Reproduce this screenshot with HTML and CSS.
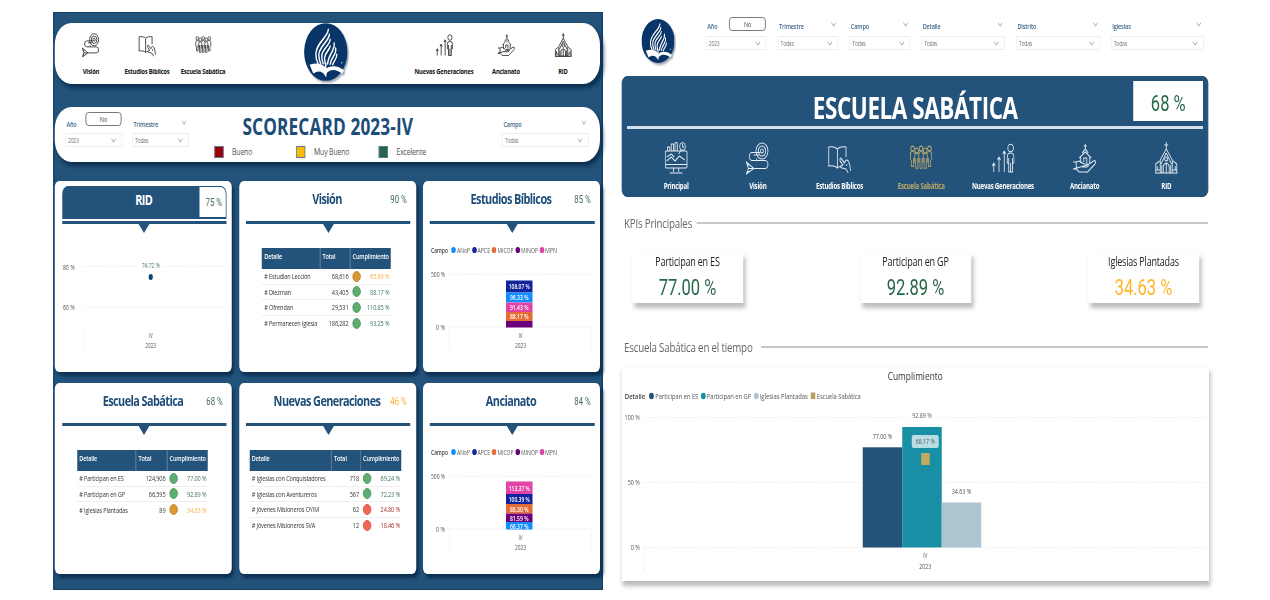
FILE: index.html
```html
<!DOCTYPE html>
<html lang="es">
<head>
<meta charset="utf-8">
<title>Scorecard 2023-IV</title>
<link rel="stylesheet" href="styles.css">
</head>
<body>
<svg class="defs" width="0" height="0" aria-hidden="true">
  <symbol id="logo" viewBox="0 0 60 60">
    <circle cx="30" cy="30" r="29.5" fill="#083467"/>
    <g fill="none" stroke="#fff" stroke-linecap="round">
      <path stroke-width="1.900" d="M33.500 7C33 15 17.500 20 16.500 32c0 4 1 7 3 10"/>
      <path stroke-width="1.900" d="M35 12C34.500 19 21 24 20.500 33c0 4 1 6 2.500 9"/>
      <path stroke-width="1.900" d="M36 17.500C35.500 23 25 27 24.500 34c0 3 .6 5 2 8"/>
      <path stroke-width="1.900" d="M36 24C35.500 28 29 30 28.400 36c0 2 .3 4 1 6"/>
      <path stroke-width="1.900" d="M41.500 21C43 29 33.500 32 32.500 42"/>
      <path stroke-width="1.900" d="M43.500 26C45.500 33 37 35 36 42.500"/>
      <path stroke-width="1.800" d="M45 32.500C46 37 40.500 39 39.500 43"/>
    </g>
    <path fill="#fff" d="M8 43c8-2 15-2 21 2l2 2c6-4 17-3 24 2l-3 3c-7-4-14-5-20-1l-3 3c-4-5-10-5-16-2z"/>
    <path fill="#fff" d="M29 41h2v14h-2z"/>
    <circle cx="52" cy="41" r=".8" fill="#fff"/>
  </symbol>
  <symbol id="i-main" viewBox="0 0 32 32">
    <rect x="1" y="9" width="29" height="17" rx="1.5"/><path d="M1 22.5h29M12 26v4M19 26v4M7 31h17M3 19l6-4 5 4 6-5 7 4M3 15l6-3 4 3"/>
    <path d="M4 9V5h3v4M9 9V2h3v7M14 9V0.8h3V9"/><circle cx="24" cy="4.5" r="3.7"/><path d="M22 8l-3 4M24 2v3h2"/>
  </symbol>
  <symbol id="i-vision" viewBox="0 0 32 32">
    <circle cx="22" cy="9" r="8"/><circle cx="22" cy="9" r="5"/><circle cx="22" cy="9" r="2"/>
    <path d="M20 10.500H9a4 4 0 0 0 0 8h17a4 4 0 0 1 0 8H10M18 13h-7M15 18.500v-2"/>
    <path d="M1 20l10 6.500L1 32l3-5.500zM4 26.500h6M2 23h3M2 29.500h3"/>
  </symbol>
  <symbol id="i-book" viewBox="0 0 32 32">
    <path d="M13.500 7C11 5 7 4.500 2 5v19c5-.5 9 0 11.500 2C15 25 16 24.500 18 24.200M13.500 7C16 5 20 4.500 25 5v10M13.500 7v19"/>
    <path d="M18 16l5 5c1-3 3-4 5-2l2 4 1 6M18 16c-2 1-1 3 0 4l3 3-3 1c-1 1 0 2 2 2l5 1 3 4M26 22v2"/>
  </symbol>
  <symbol id="i-people" viewBox="-1 -1 34 36">
    <circle cx="4" cy="7" r="2.600"/><circle cx="10" cy="9" r="2.600"/><circle cx="16" cy="7" r="2.600"/><circle cx="22" cy="9" r="2.600"/><circle cx="28" cy="7" r="2.600"/>
    <path d="M1 19v-6q0-3 3-3t3 2M2.500 19v7h3v-9M7 22v-7q0-3 3-3t3 3v7M8.500 17v11h3V17M13 13q0-3 3-3t3 3M14.500 17v11h3V17M19 22v-7q0-3 3-3t3 3v7M20.500 17v11h3V17M25 12q0-2 3-2t3 3v6M26.500 17v9h3v-7"/>
  </symbol>
  <symbol id="i-growth" viewBox="0 0 32 32">
    <path d="M4 30v-8M11 30V15M18 30V10M2 24l2-3 2 3M9 18l2-3 2 3M16 12l2-3 2 3"/>
    <circle cx="26.500" cy="6" r="3.700"/><path d="M22 21v-6q0-4 4.500-4t4.500 4v6h-2v9h-5v-9zM26.500 21v9M24 16v5M29 16v5"/>
  </symbol>
  <symbol id="i-care" viewBox="0 0 32 32">
    <path d="M17 2v5M15 4h4M17 7l-4 4M17 7l4 4M9 16l8-6 8 6M11 15v6M23 15v6M15 20v-4h4v5"/>
    <path d="M1 20h4l4-1 6 3h5c2 1 1 3-1 3h-6M20 23l8-4c3-1 4 1 2 3l-10 8H9l-4-3H1zM5 20v7"/>
  </symbol>
  <symbol id="i-church" viewBox="0 0 32 32">
    <path d="M16 0v8M13.500 3h5M16 7L8 18v13M16 7l8 11v13M7 19L2 22v9h28v-9l-5-3M16 11l-7 11M16 11l7 11M2 28h6M24 28h6M1 31h30M4 24v4M28 24v4"/>
    <circle cx="16" cy="17" r="2"/><path d="M12 31v-6q0-3 4-4 4 1 4 4v6M16 21v10M10 23v8M22 23v8"/>
  </symbol>
  <symbol id="chev" viewBox="0 0 8 6"><path d="M.7.8L4 5 7.300.8" fill="none" stroke="#888" stroke-width=".9"/></symbol>
</svg>

<div class="stage">
  <section class="board">
    <header class="topbar">
      <nav class="nav nav-left">
        <a class="tab"><svg><use href="#i-vision"/></svg>Visión</a>
        <a class="tab"><svg><use href="#i-book"/></svg>Estudios Bíblicos</a>
        <a class="tab"><svg><use href="#i-people"/></svg>Escuela Sabática</a>
      </nav>
      <svg class="logo"><use href="#logo"/></svg>
      <nav class="nav nav-right">
        <a class="tab"><svg><use href="#i-growth"/></svg>Nuevas Generaciones</a>
        <a class="tab"><svg><use href="#i-care"/></svg>Ancianato</a>
        <a class="tab"><svg><use href="#i-church"/></svg>RID</a>
      </nav>
    </header>

    <div class="titlebar">
      <div class="filters">
        <div class="filter w57"><div class="flabel">Año<span class="no">No</span></div><div class="select">2023<svg><use href="#chev"/></svg></div></div>
        <div class="filter w57"><div class="flabel">Trimestre<svg><use href="#chev"/></svg></div><div class="select">Todas<svg><use href="#chev"/></svg></div></div>
      </div>
      <div class="headline">
        <h1>SCORECARD 2023-IV</h1>
        <div class="levels">
          <span class="level"><i class="red"></i>Bueno</span>
          <span class="level"><i class="yellow"></i>Muy Bueno</span>
          <span class="level"><i class="green"></i>Excelente</span>
        </div>
      </div>
      <div class="filters">
        <div class="filter w87"><div class="flabel">Campo<svg><use href="#chev"/></svg></div><div class="select">Todas<svg><use href="#chev"/></svg></div></div>
      </div>
    </div>

    <div class="cards">
      <article class="card">
        <div class="chead solid"><h2>RID</h2><b class="pct">75 %</b></div>
        <div class="rule"></div>
        <svg class="plot" viewBox="0 0 177 148" preserveAspectRatio="none">
          <path class="grid" d="M28 42.500h145M28 83h145M29.500 104v24M173 104v24"/>
          <rect x="85" y="36" width="22" height="10" fill="#fff"/>
          <g class="t">
            <text lengthAdjust="spacingAndGlyphs" x="8" y="45.500" textLength="12">80 %</text>
            <text lengthAdjust="spacingAndGlyphs" x="8" y="85.500" textLength="12">60 %</text>
            <text lengthAdjust="spacingAndGlyphs" class="g" x="87" y="44" textLength="18">74.72 %</text>
            <text lengthAdjust="spacingAndGlyphs" x="94" y="113.500" textLength="4">IV</text>
            <text lengthAdjust="spacingAndGlyphs" x="90.500" y="123.500" textLength="11">2023</text>
          </g>
          <ellipse cx="96" cy="53" rx="2.100" ry="2.900" fill="#12426f"/>
        </svg>
      </article>
      <article class="card">
        <div class="chead"><h2>Visión</h2><b class="pct">90 %</b></div>
        <div class="rule"></div>
        <table class="tbl t-vision">
          <colgroup><col class="c1"><col class="c2"><col class="c3"><col></colgroup>
          <tr><th>Detalle</th><th>Total</th><th colspan="2">Cumplimiento</th></tr>
          <tr><td># Estudian Lección</td><td>68,616</td><td><i class="o"></i></td><td class="c-o">65.89 %</td></tr>
          <tr><td># Diezman</td><td>43,405</td><td><i></i></td><td>88.17 %</td></tr>
          <tr><td># Ofrendan</td><td>29,531</td><td><i></i></td><td>110.85 %</td></tr>
          <tr><td># Permanecen Iglesia</td><td>186,282</td><td><i></i></td><td>93.25 %</td></tr>
        </table>
      </article>
      <article class="card">
        <div class="chead"><h2>Estudios Bíblicos</h2><b class="pct">85 %</b></div>
        <div class="rule"></div>
        <svg class="plot" viewBox="0 0 177 148" preserveAspectRatio="none">
          <path class="grid" d="M26 50.500h142M26 103h142M26.500 104v24M168 104v24"/>
          <g class="t">
            <text lengthAdjust="spacingAndGlyphs" class="b" x="8" y="29" textLength="17">Campo</text>
            <text lengthAdjust="spacingAndGlyphs" x="34" y="29" textLength="13">ANoP</text>
            <text lengthAdjust="spacingAndGlyphs" x="54.500" y="29" textLength="12.500">APCE</text>
            <text lengthAdjust="spacingAndGlyphs" x="74.500" y="29" textLength="16">MICOP</text>
            <text lengthAdjust="spacingAndGlyphs" x="98" y="29" textLength="17">MINOP</text>
            <text lengthAdjust="spacingAndGlyphs" x="122" y="29" textLength="12">MPN</text>
            <text lengthAdjust="spacingAndGlyphs" x="8" y="53" textLength="14">500 %</text>
            <text lengthAdjust="spacingAndGlyphs" x="13" y="106" textLength="9">0 %</text>
            <text lengthAdjust="spacingAndGlyphs" x="95.500" y="113.500" textLength="4">IV</text>
            <text lengthAdjust="spacingAndGlyphs" x="92" y="123.500" textLength="11">2023</text>
          </g>
          <ellipse cx="30.500" cy="26" rx="2.300" ry="3.100" fill="#118dff"/><ellipse cx="51.500" cy="26" rx="2.300" ry="3.100" fill="#12239e"/><ellipse cx="71" cy="26" rx="2.300" ry="3.100" fill="#e66c37"/><ellipse cx="94.800" cy="26" rx="2.300" ry="3.100" fill="#6b007b"/><ellipse cx="119" cy="26" rx="2.300" ry="3.100" fill="#e044a7"/>
          <rect x="83" y="56.500" width="26.500" height="12" fill="#12239e"/><rect x="83" y="68.500" width="26.500" height="10" fill="#118dff"/><rect x="83" y="78.500" width="26.500" height="9.500" fill="#e044a7"/><rect x="83" y="88" width="26.500" height="9" fill="#e66c37"/><rect x="83" y="97" width="26.500" height="6.500" fill="#6b007b"/>
          <g class="t v">
            <text lengthAdjust="spacingAndGlyphs" x="85.800" y="65" textLength="21">108.07 %</text>
            <text lengthAdjust="spacingAndGlyphs" x="87" y="76.300" textLength="18.500">96.33 %</text>
            <text lengthAdjust="spacingAndGlyphs" x="87" y="86" textLength="18.500">91.43 %</text>
            <text lengthAdjust="spacingAndGlyphs" x="87" y="95.300" textLength="18.500">88.17 %</text>
          </g>
        </svg>
      </article>
      <article class="card">
        <div class="chead"><h2>Escuela Sabática</h2><b class="pct">68 %</b></div>
        <div class="rule"></div>
        <table class="tbl t-escuela">
          <colgroup><col class="c1"><col class="c2"><col class="c3"><col></colgroup>
          <tr><th>Detalle</th><th>Total</th><th colspan="2">Cumplimiento</th></tr>
          <tr><td># Participan en ES</td><td>124,906</td><td><i></i></td><td>77.00 %</td></tr>
          <tr><td># Participan en GP</td><td>66,595</td><td><i></i></td><td>92.89 %</td></tr>
          <tr><td># Iglesias Plantadas</td><td>89</td><td><i class="o"></i></td><td class="c-o">34.63 %</td></tr>
        </table>
      </article>
      <article class="card">
        <div class="chead"><h2>Nuevas Generaciones</h2><b class="pct c-o">46 %</b></div>
        <div class="rule"></div>
        <table class="tbl t-nuevas">
          <colgroup><col class="c1"><col class="c2"><col class="c3"><col></colgroup>
          <tr><th>Detalle</th><th>Total</th><th colspan="2">Cumplimiento</th></tr>
          <tr><td># Iglesias con Conquistadores</td><td>718</td><td><i></i></td><td>69.24 %</td></tr>
          <tr><td># Iglesias con Aventureros</td><td>567</td><td><i></i></td><td>72.23 %</td></tr>
          <tr><td># Jóvenes Misioneros OYIM</td><td>62</td><td><i class="r"></i></td><td class="c-r">24.80 %</td></tr>
          <tr><td># Jóvenes Misioneros SVA</td><td>12</td><td><i class="r"></i></td><td class="c-r">18.46 %</td></tr>
        </table>
      </article>
      <article class="card">
        <div class="chead"><h2>Ancianato</h2><b class="pct">84 %</b></div>
        <div class="rule"></div>
        <svg class="plot" viewBox="0 0 177 148" preserveAspectRatio="none">
          <path class="grid" d="M26 50.500h142M26 103h142M26.500 104v24M168 104v24"/>
          <g class="t">
            <text lengthAdjust="spacingAndGlyphs" class="b" x="8" y="29" textLength="17">Campo</text>
            <text lengthAdjust="spacingAndGlyphs" x="34" y="29" textLength="13">ANoP</text>
            <text lengthAdjust="spacingAndGlyphs" x="54.500" y="29" textLength="12.500">APCE</text>
            <text lengthAdjust="spacingAndGlyphs" x="74.500" y="29" textLength="16">MICOP</text>
            <text lengthAdjust="spacingAndGlyphs" x="98" y="29" textLength="17">MINOP</text>
            <text lengthAdjust="spacingAndGlyphs" x="122" y="29" textLength="12">MPN</text>
            <text lengthAdjust="spacingAndGlyphs" x="8" y="53" textLength="14">500 %</text>
            <text lengthAdjust="spacingAndGlyphs" x="13" y="106" textLength="9">0 %</text>
            <text lengthAdjust="spacingAndGlyphs" x="95.500" y="113.500" textLength="4">IV</text>
            <text lengthAdjust="spacingAndGlyphs" x="92" y="123.500" textLength="11">2023</text>
          </g>
          <ellipse cx="30.500" cy="26" rx="2.300" ry="3.100" fill="#118dff"/><ellipse cx="51.500" cy="26" rx="2.300" ry="3.100" fill="#12239e"/><ellipse cx="71" cy="26" rx="2.300" ry="3.100" fill="#e66c37"/><ellipse cx="94.800" cy="26" rx="2.300" ry="3.100" fill="#6b007b"/><ellipse cx="119" cy="26" rx="2.300" ry="3.100" fill="#e044a7"/>
          <rect x="83" y="55.500" width="26.500" height="12.500" fill="#e044a7"/><rect x="83" y="68" width="26.500" height="10" fill="#12239e"/><rect x="83" y="78" width="26.500" height="9.500" fill="#e66c37"/><rect x="83" y="87.500" width="26.500" height="8.500" fill="#6b007b"/><rect x="83" y="96" width="26.500" height="7.500" fill="#118dff"/>
          <g class="t v">
            <text lengthAdjust="spacingAndGlyphs" x="85.800" y="64.500" textLength="21">113.37 %</text>
            <text lengthAdjust="spacingAndGlyphs" x="85.800" y="75.800" textLength="21">100.39 %</text>
            <text lengthAdjust="spacingAndGlyphs" x="87" y="85.500" textLength="18.500">86.30 %</text>
            <text lengthAdjust="spacingAndGlyphs" x="87" y="94.500" textLength="18.500">81.59 %</text>
            <text lengthAdjust="spacingAndGlyphs" x="87" y="102.500" textLength="18.500">66.37 %</text>
          </g>
        </svg>
      </article>
    </div>
  </section>

  <section class="detail">
    <div class="dtop">
      <svg class="logo small"><use href="#logo"/></svg>
      <div class="filters">
        <div class="filter w61"><div class="flabel">Año<span class="no">No</span></div><div class="select">2023<svg><use href="#chev"/></svg></div></div>
        <div class="filter w61"><div class="flabel">Trimestre<svg><use href="#chev"/></svg></div><div class="select">Todas<svg><use href="#chev"/></svg></div></div>
        <div class="filter w61"><div class="flabel">Campo<svg><use href="#chev"/></svg></div><div class="select">Todas<svg><use href="#chev"/></svg></div></div>
        <div class="filter w84"><div class="flabel">Detalle<svg><use href="#chev"/></svg></div><div class="select">Todas<svg><use href="#chev"/></svg></div></div>
        <div class="filter w84"><div class="flabel">Distrito<svg><use href="#chev"/></svg></div><div class="select">Todas<svg><use href="#chev"/></svg></div></div>
        <div class="filter w93"><div class="flabel">Iglesias<svg><use href="#chev"/></svg></div><div class="select">Todas<svg><use href="#chev"/></svg></div></div>
      </div>
    </div>
    <div class="banner">
      <div class="btitle"><h1>ESCUELA SABÁTICA</h1><div class="score">68 %</div></div>
      <nav class="bnav">
        <a class="tab"><svg><use href="#i-main"/></svg>Principal</a>
        <a class="tab"><svg><use href="#i-vision"/></svg>Visión</a>
        <a class="tab"><svg><use href="#i-book"/></svg>Estudios Bíblicos</a>
        <a class="tab active"><svg><use href="#i-people"/></svg>Escuela Sabática</a>
        <a class="tab"><svg><use href="#i-growth"/></svg>Nuevas Generaciones</a>
        <a class="tab"><svg><use href="#i-care"/></svg>Ancianato</a>
        <a class="tab"><svg><use href="#i-church"/></svg>RID</a>
      </nav>
    </div>
    <h3 class="sect s1">KPIs Principales</h3>
    <div class="kpis">
      <div class="kpi"><span>Participan en ES</span><b>77.00 %</b></div>
      <div class="kpi"><span>Participan en GP</span><b>92.89 %</b></div>
      <div class="kpi"><span>Iglesias Plantadas</span><b class="c-y">34.63 %</b></div>
    </div>
    <h3 class="sect s2">Escuela Sabática en el tiempo</h3>
    <svg class="bigplot" viewBox="622 368 587 213" preserveAspectRatio="none">
      <path class="grid" d="M645 417.500h562M645 482.500h562M645 547.500h562M644.500 548v25"/>
      <rect x="908" y="410" width="28" height="10" fill="#fff"/>
      <text lengthAdjust="spacingAndGlyphs" class="ct" x="888" y="380.500" textLength="55">Cumplimiento</text>
      <ellipse cx="651.700" cy="396" rx="2.400" ry="3.300" fill="#23537b"/><ellipse cx="703.600" cy="396" rx="2.400" ry="3.300" fill="#188fa5"/><ellipse cx="756.600" cy="396" rx="2.400" ry="3.300" fill="#adc4d1"/><rect x="811" y="392.500" width="4.500" height="6.500" fill="#b8a15a"/>
      <g class="t">
        <text lengthAdjust="spacingAndGlyphs" class="b" x="625" y="399.500" textLength="20.500">Detalle</text>
        <text lengthAdjust="spacingAndGlyphs" x="655.500" y="399.500" textLength="43">Participan en ES</text>
        <text lengthAdjust="spacingAndGlyphs" x="707" y="399.500" textLength="44.500">Participan en GP</text>
        <text lengthAdjust="spacingAndGlyphs" x="760" y="399.500" textLength="48">Iglesias Plantadas</text>
        <text lengthAdjust="spacingAndGlyphs" x="817" y="399.500" textLength="44">Escuela Sabática</text>
        <text lengthAdjust="spacingAndGlyphs" x="625" y="420" textLength="15">100 %</text>
        <text lengthAdjust="spacingAndGlyphs" x="628" y="485" textLength="12">50 %</text>
        <text lengthAdjust="spacingAndGlyphs" x="631" y="550" textLength="9">0 %</text>
      </g>
      <rect x="863" y="447.300" width="39.500" height="100.200" fill="#23537b"/><rect x="902.500" y="427" width="39.500" height="120.500" fill="#188fa5"/><rect x="942" y="502.500" width="39.500" height="45" fill="#adc4d1"/>
      <rect x="912" y="435" width="27" height="13" rx="2" fill="#b9dde4"/><rect x="921.500" y="453" width="8.500" height="12" fill="#c2a962"/>
      <g class="t">
        <text lengthAdjust="spacingAndGlyphs" x="873" y="439" textLength="19.500">77.00 %</text>
        <text lengthAdjust="spacingAndGlyphs" x="912.500" y="418.500" textLength="19.500">92.89 %</text>
        <text lengthAdjust="spacingAndGlyphs" x="952" y="494.500" textLength="19.500">34.63 %</text>
        <text lengthAdjust="spacingAndGlyphs" x="916" y="444.500" textLength="19">68.17 %</text>
        <text lengthAdjust="spacingAndGlyphs" x="923.500" y="558" textLength="4">IV</text>
        <text lengthAdjust="spacingAndGlyphs" x="919.500" y="569" textLength="12">2023</text>
      </g>
    </svg>
  </section>
</div>
</body>
</html>
```
FILE: styles.css
```css
:root {
  --u: calc(1px / .75);
  --blue: #23537b;
}
* { box-sizing: border-box; }
body {
  margin: 0;
  height: 600px;
  background: #fff;
  font-family: "Open Sans", "Noto Sans", sans-serif;
}
h1, h2, h3 { margin: 0; }
svg { display: block; flex: none; }
.defs { position: absolute; }
/* Both panels are condensed horizontally; --u is one on-screen pixel of width. */
.stage {
  width: 100%;
  height: 600px;
  transform: scaleX(.75);
  transform-origin: 0 0;
  display: flex;
  padding-left: calc(53 * var(--u));
}

.board {
  width: calc(550 * var(--u));
  height: 578px;
  margin-top: 12px;
  padding: 10px calc(.5 * var(--u)) 0;
  background: var(--blue);
  border: 2px solid #153f68;
  border-top-width: 1px;
  border-bottom-width: 1px;
  flex: none;
}
.topbar, .titlebar {
  width: calc(545 * var(--u));
  background: #fff;
  border-radius: 22px;
  box-shadow: 3px 4px 5px #0c2f50;
  display: flex;
}
.topbar { height: 61px; }
.nav { display: flex; padding-top: 10px; }
.nav-left { width: calc(249 * var(--u)); padding-left: calc(8 * var(--u)); }
.nav-left .tab { width: calc(56 * var(--u)); }
.nav-right { width: calc(252 * var(--u)); padding-left: calc(65 * var(--u)); }
.nav-right .tab { width: calc(62 * var(--u)); }
.nav-right .tab:last-child { width: calc(52 * var(--u)); }
.tab {
  display: flex;
  flex-direction: column;
  align-items: center;
  font-size: 7.8px;
  font-weight: 700;
  line-height: 11px;
  letter-spacing: -.3px;
  color: #111;
  white-space: nowrap;
}
.tab svg {
  width: 24px;
  height: 24px;
  margin-bottom: 9px;
  color: #333;
  fill: none;
  stroke: currentColor;
  stroke-width: 1.3;
  stroke-linejoin: round;
}
.logo { width: calc(44 * var(--u)); height: 60px; margin-top: -1px; filter: drop-shadow(2px 2px 1px #9aa5b2); }

.titlebar {
  height: 55px;
  margin-top: 23px;
  padding: 5px calc(11 * var(--u)) 0 calc(10 * var(--u));
  justify-content: space-between;
}
.filters { display: flex; gap: calc(10 * var(--u)); }
.flabel {
  height: 21px;
  padding: 7px 3px 0 2px;
  display: flex;
  justify-content: space-between;
  font-size: 7.4px;
  font-weight: 600;
  line-height: 10px;
  letter-spacing: -.2px;
  color: #41688a;
}
.flabel svg, .select svg { width: 7px; height: 5px; }
.flabel svg { margin-top: 1px; }
.no {
  width: calc(35.500 * var(--u));
  height: 14px;
  margin: -7px -2px 0 0;
  border: 1px solid #666;
  border-radius: 4px;
  text-align: center;
  font-weight: 400;
  line-height: 12px;
  color: #444;
}
.select {
  height: 14px;
  padding: 0 7px 0 3px;
  border: 1px solid #eee;
  display: flex;
  align-items: center;
  justify-content: space-between;
  font-size: 6.8px;
  letter-spacing: -.3px;
  color: #777;
}
.w57 { width: calc(57 * var(--u)); }
.w61 { width: calc(61 * var(--u)); }
.w84 { width: calc(84 * var(--u)); }
.w87 { width: calc(87 * var(--u)); }
.w93 { width: calc(93 * var(--u)); }
.headline { width: calc(211 * var(--u)); margin-right: calc(51 * var(--u)); }
.headline h1 {
  margin: 1px 0 0 calc(28 * var(--u));
  font-size: 23px;
  line-height: 26px;
  letter-spacing: .15px;
  color: #1c4d79;
  white-space: nowrap;
}
.levels {
  display: grid;
  grid-template-columns: calc(82 * var(--u)) calc(82.500 * var(--u)) auto;
  margin-top: 7px;
  font-size: 9.3px;
  line-height: 12px;
  letter-spacing: -.25px;
  color: #555;
}
.level { display: flex; align-items: center; gap: calc(8.500 * var(--u)); white-space: nowrap; }
.level i { width: calc(9 * var(--u)); height: 12px; border: 1px solid #5479a0; }
.red { background: #9b0008; }
.yellow { background: #ffb900; }
.green { background: #276749; }

.cards {
  display: grid;
  grid-template-columns: repeat(3, calc(177 * var(--u)));
  grid-auto-rows: 191px;
  gap: 11px calc(7 * var(--u));
  margin-top: 19px;
}
.card { background: #fff; border-radius: 6px; box-shadow: 3px 4px 4px #0d3052; padding-top: 3px; }
.chead {
  height: 35px;
  display: grid;
  grid-template-columns: calc(34 * var(--u)) 1fr calc(35 * var(--u));
}
.chead h2 {
  grid-column: 2;
  display: flex;
  justify-content: center;
  font-size: 14.5px;
  line-height: 30px;
  letter-spacing: -.75px;
  color: #1c4d79;
  white-space: nowrap;
}
.pct { text-align: center; font-family: Roboto, sans-serif; font-size: 10.300px; font-weight: 400; line-height: 31px; color: #3f6b54; white-space: nowrap; }
.pct.c-o { color: #fdae35; }
.solid {
  width: calc(164.500 * var(--u));
  margin: 2px 0 0 calc(7 * var(--u));
  height: 33px;
  background: var(--blue);
  border-radius: 8px 8px 0 0;
  grid-template-columns: calc(26 * var(--u)) 1fr calc(27 * var(--u));
}
.solid h2 { color: #fff; line-height: 28px; }
.solid .pct { height: 30px; margin: 1px 1px 0 0; padding-left: 3px; line-height: 32px; background: #fff; border-radius: 0 7px 0 0; }
.rule { position: relative; width: calc(164.500 * var(--u)); height: 3px; margin: 2px 0 0 calc(7 * var(--u)); background: var(--blue); }
.rule::after { content: ""; position: absolute; left: 50%; top: 2px; margin-left: -8px; border: 8px solid transparent; border-top: 10px solid var(--blue); border-bottom: 0; }
.plot { width: 100%; height: 148px; }
.grid { fill: none; stroke: #ddd; stroke-width: .7; stroke-dasharray: 1 1.5; }
.t { font-size: 7.600px; fill: #555; }
.t .b { font-weight: 600; fill: #444; }
.t .g { fill: #4d7561; }
.t.v { fill: #fff; font-weight: 600; }
.ct { font-size: 11.5px; fill: #333; }

.tbl { border-collapse: collapse; table-layout: fixed; margin-top: 24px; font-size: 7.4px; letter-spacing: -.15px; color: #333; white-space: nowrap; }
.tbl tr { height: 15.500px; }
.tbl tr:first-child { height: 20.500px; }
.tbl th { padding: 0 3px; background: var(--blue); color: #fff; text-align: left; font-weight: 600; vertical-align: top; line-height: 16px; letter-spacing: -.2px; }
.tbl th + th { border-left: 1px solid #4d7495; }
.tbl td { padding: 0 2px 0 3px; line-height: 12px; border-bottom: 1px solid #eee; text-align: right; }
.tbl td:first-child { text-align: left; }
.tbl tr:last-child td { border-bottom: 0; }
.tbl td:last-child { color: #3c7455; padding-left: 0; }
.tbl td:nth-child(3) { padding: 0; }
.tbl td i { display: block; width: 11px; height: 11px; margin: 0 auto; border-radius: 50%; background: #60ad72; border: 1px solid #45935a; }
.tbl td i.o { background: #d99831; border-color: #bd8224; }
.tbl td i.r { background: #f26556; border-color: #cf4d42; }
.tbl td.c-o:last-child { color: #fbad3c; }
.tbl td.c-r:last-child { color: #a62b2b; }
.c3 { width: calc(13 * var(--u)); }
.t-vision { width: calc(129 * var(--u)); margin-left: calc(23 * var(--u)); }
.t-vision .c1 { width: calc(58 * var(--u)); }
.t-vision .c2 { width: calc(30 * var(--u)); }
.t-escuela { width: calc(131 * var(--u)); margin-left: calc(22 * var(--u)); }
.t-escuela .c1 { width: calc(59 * var(--u)); }
.t-escuela .c2 { width: calc(31 * var(--u)); }
.t-nuevas { width: calc(152 * var(--u)); margin-left: calc(10.500 * var(--u)); }
.t-nuevas .c1 { width: calc(82 * var(--u)); }
.t-nuevas .c2 { width: calc(29 * var(--u)); }

.detail { width: calc(590 * var(--u)); margin-left: calc(19 * var(--u)); flex: none; }
.dtop { display: flex; height: 76px; padding: 17px 0 0 calc(19 * var(--u)); }
.logo.small { width: calc(33.500 * var(--u)); height: 48px; margin: 0 calc(31.300 * var(--u)) 0 0; }
.dtop .filters { gap: calc(10.800 * var(--u)); }
.dtop .flabel { height: 19px; padding-top: 4px; }
.dtop .no { margin-top: -4px; width: calc(37 * var(--u)); }
.banner { width: calc(586 * var(--u)); height: 121px; padding: 4px calc(4 * var(--u)) 0 calc(4.500 * var(--u)); background: var(--blue); border: 1px solid #174a76; border-radius: 7px; }
.btitle { display: grid; grid-template-columns: calc(70 * var(--u)) 1fr calc(70 * var(--u)); height: 48px; border-bottom: 3px solid #d6e0ea; }
.btitle h1 { grid-column: 2; text-align: center; font-size: 30px; line-height: 53px; letter-spacing: -.6px; color: #fff; white-space: nowrap; }
.score { height: 40px; background: #fff; color: #276749; text-align: center; font: 400 22px/46px Roboto, sans-serif; }
.bnav { display: grid; grid-template-columns: repeat(7, calc(81.700 * var(--u))); justify-content: center; margin: 12px calc(-9 * var(--u)) 0 calc(3 * var(--u)); }
.bnav .tab { color: #fff; font-size: 8.2px; }
.bnav .tab svg { width: 32px; height: 34px; margin-bottom: 5px; color: #e8eef4; stroke-width: 1.1; }
.bnav .tab.active, .bnav .tab.active svg { color: #bda968; }
.sect { display: flex; align-items: center; height: 20px; width: calc(586 * var(--u)); padding-left: calc(2 * var(--u)); font-size: 13px; font-weight: 400; letter-spacing: -.25px; color: #666; white-space: nowrap; }
.sect::after { content: ""; flex: 1; height: 2px; background: #c8c8c8; }
.s1 { margin-top: 16px; gap: calc(5 * var(--u)); }
.s2 { margin-top: 34px; gap: calc(9 * var(--u)); }
.kpis { display: flex; gap: calc(117 * var(--u)); padding-left: calc(10 * var(--u)); margin-top: 21px; }
.kpi { width: calc(111 * var(--u)); height: 49px; display: flex; flex-direction: column; align-items: center; background: #fff; box-shadow: 3px 4px 5px 1px #bbb; white-space: nowrap; }
.kpi span { font-size: 12px; line-height: 16px; letter-spacing: -.25px; color: #222; }
.kpi b { font: 400 22px/36px Roboto, sans-serif; color: #276749; }
.kpi b.c-y { color: #ffb52a; }
.bigplot { width: calc(587 * var(--u)); height: 213px; margin-top: 11px; background: #fff; box-shadow: 1px 4px 5px 1px #bbb; }
```
